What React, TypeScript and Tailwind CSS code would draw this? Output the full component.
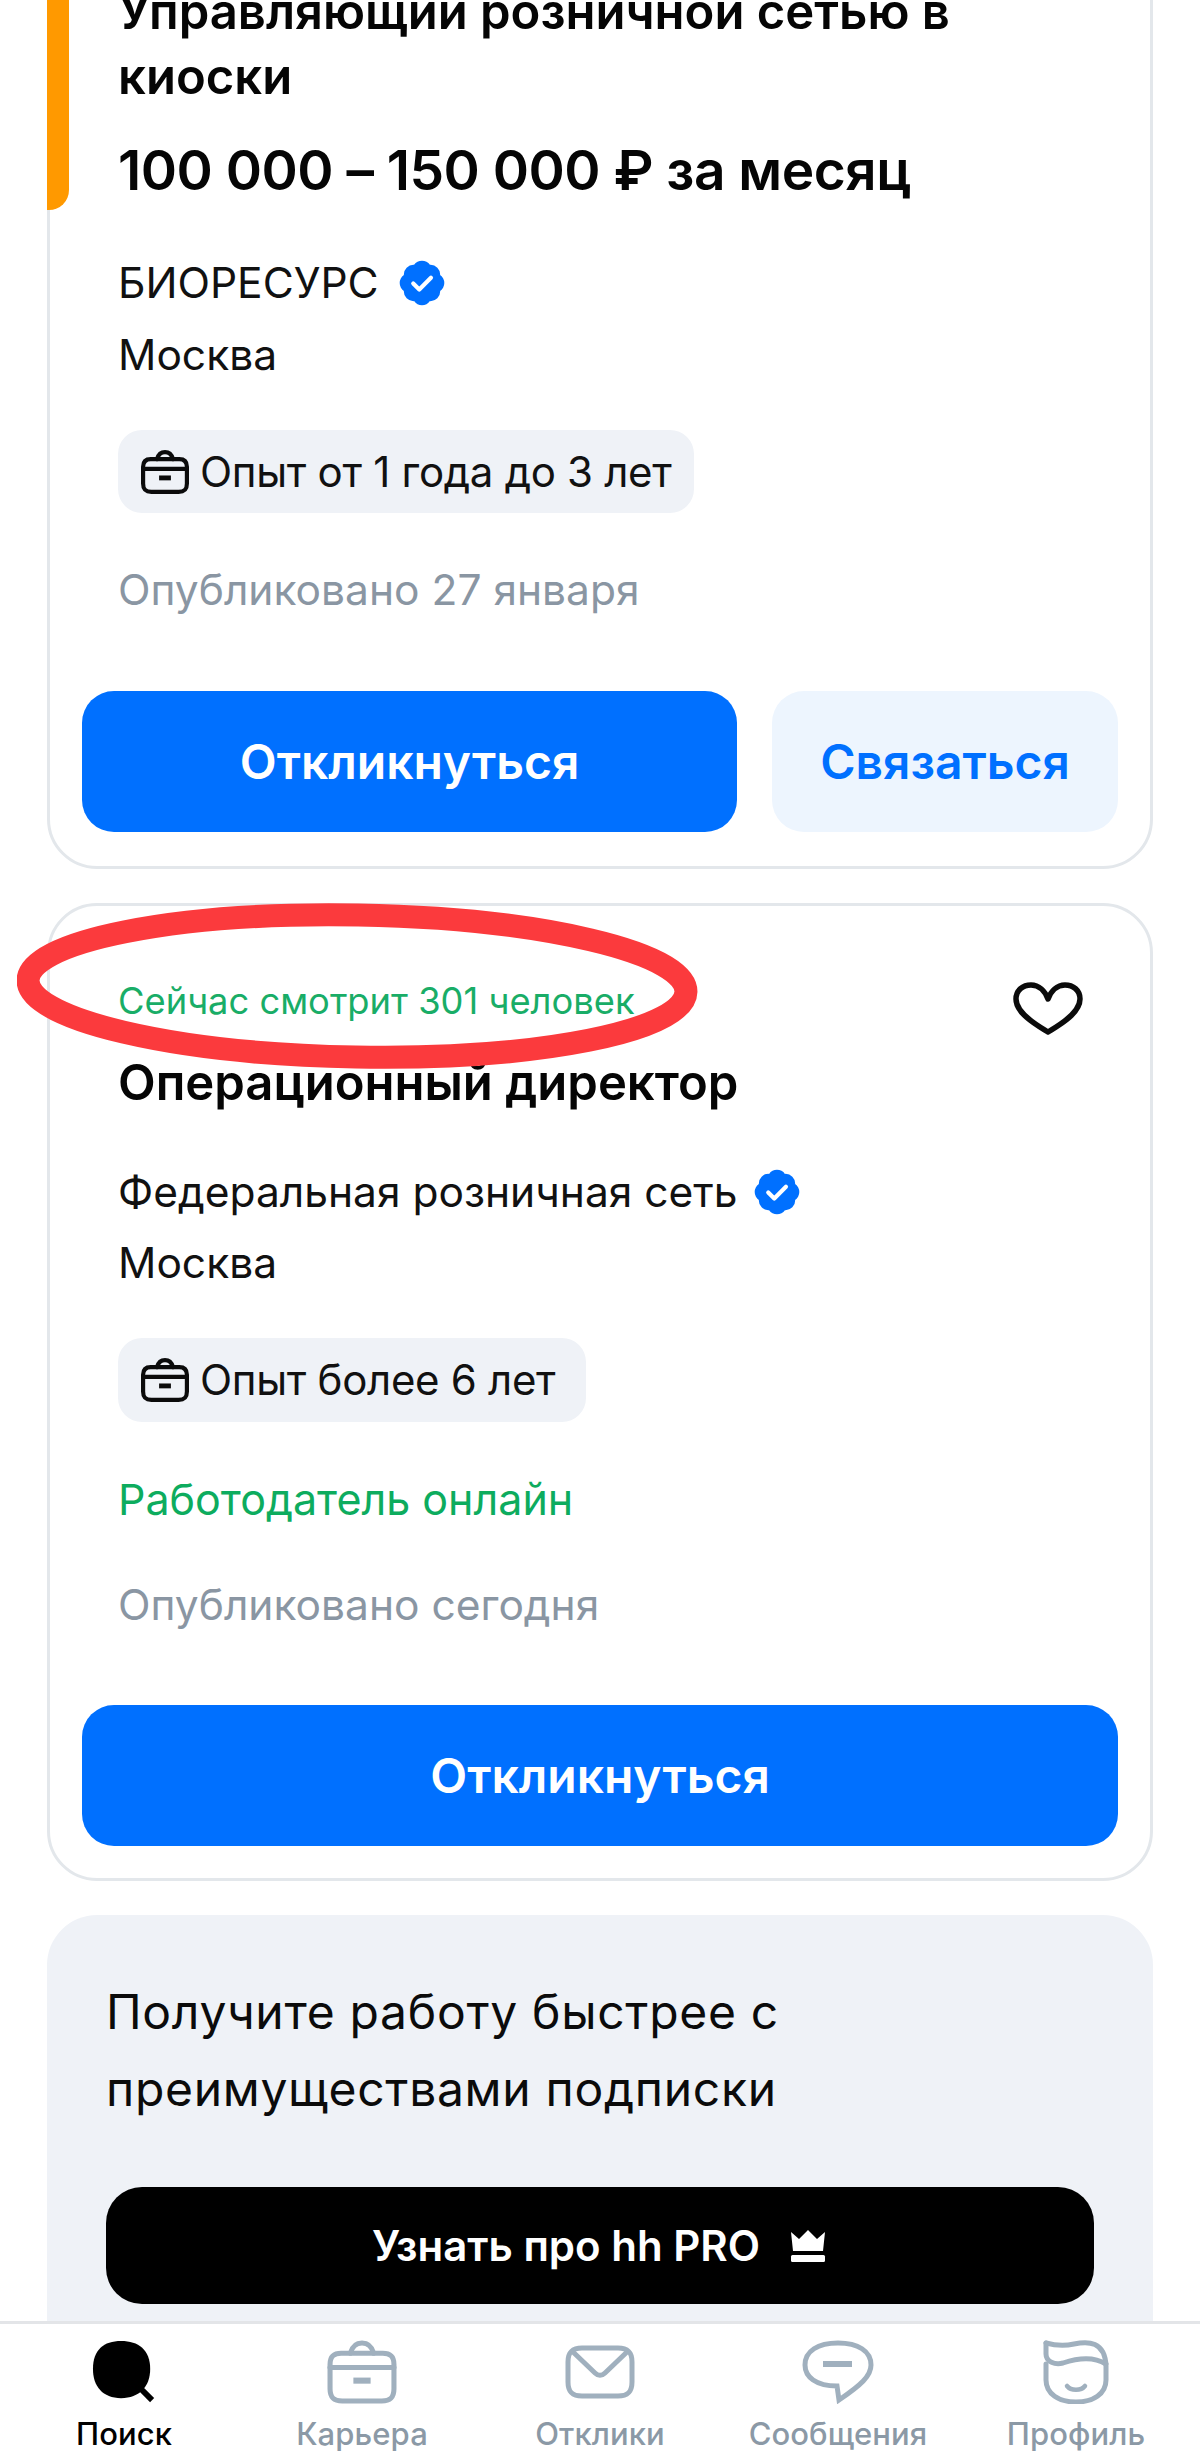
import React from "react";

const font = "font-['Inter','Liberation_Sans',sans-serif]";

function Verified({ className }: { className: string }) {
  return (
    <svg viewBox="0 0 24 24" className={className}>
      <path
        fill="#0070ff"
        d="M3.3 8.2a4.6 4.6 0 0 1 4.9-4.9 4.6 4.6 0 0 1 7.6 0 4.6 4.6 0 0 1 4.9 4.9 4.6 4.6 0 0 1 0 7.6 4.6 4.6 0 0 1-4.9 4.9 4.6 4.6 0 0 1-7.6 0 4.6 4.6 0 0 1-4.9-4.9 4.6 4.6 0 0 1 0-7.6Z"
      />
      <path d="M7.8 12.2l2.9 2.9 5.6-5.6" fill="none" stroke="#fff" strokeWidth="2" strokeLinecap="round" strokeLinejoin="round" />
    </svg>
  );
}

function Case({ className, stroke, width }: { className: string; stroke: string; width: number }) {
  return (
    <svg viewBox="0 0 69 63" className={className} fill="none" stroke={stroke} strokeWidth={width} strokeLinejoin="round" strokeLinecap="round">
      <path d="M23 13 C25 6 29 3 34.5 3 C40 3 44 6 46 13" />
      <path d="M3 24 C3 16 7 13 14 13 H55 C62 13 66 16 66 24 V48 C66 57 62 60 54 60 H15 C7 60 3 57 3 48 Z" />
      <path d="M3 27 H66" />
      <path d="M26 40 H43" strokeWidth={width + 1} strokeLinecap="butt" />
    </svg>
  );
}

function Chip({ text, extra }: { text: string; extra: string }) {
  return (
    <div className={`flex items-center rounded-[24px] bg-[#eff2f7] pl-[23px] ${extra}`}>
      <Case className="h-[44px] w-[48px] shrink-0" stroke="#0b0b0b" width={6} />
      <span className="ml-[11px] text-[42px] leading-[56px] tracking-[-0.3px] text-[#111111]">{text}</span>
    </div>
  );
}

function Blue({ extra, children }: { extra: string; children: React.ReactNode }) {
  return (
    <div className={`flex h-[141px] items-center justify-center rounded-[32px] text-[48px] font-semibold ${extra}`}>
      {children}
    </div>
  );
}

function Tab({ label, active, icon }: { label: string; active?: boolean; icon: React.ReactNode }) {
  return (
    <div className="flex flex-col items-center">
      <div className="flex h-[64px] items-center justify-center">{icon}</div>
      <span className={`mt-[8px] text-[31px] font-medium leading-[44px] tracking-[0.1px] ${active ? "text-black" : "text-[#8b99a6]"}`}>
        {label}
      </span>
    </div>
  );
}

export default function App() {
  return (
    <div className={`flex h-[2462px] w-[1200px] flex-col overflow-hidden bg-white ${font}`}>
      <main className="flex min-h-0 flex-1 flex-col overflow-hidden px-[47px]">
        {/* Card 1 */}
        <section className="relative mt-[-70px] shrink-0 rounded-[50px] border-[3px] border-[#e3e7eb] px-[32px] pb-[34px] pt-[46px]">
          <div className="absolute left-[-3px] top-[-3px] h-[280px] w-[22px] rounded-br-[20px] bg-[#ff9900]" />
          <div className="pl-[36px] pr-[38px]">
            <h2 className="text-[49px] font-semibold leading-[65px] text-[#050505]">
              Управляющий розничной сетью в киоски
            </h2>
            <p className="mt-[29px] text-[55px] font-semibold leading-[64px] tracking-[-0.5px] text-[#050505]">
              100 000 – 150 000 ₽ за месяц
            </p>
            <div className="mt-[53px] flex items-center text-[42.5px] leading-[56px] text-[#111111]">
              БИОРЕСУРС
              <Verified className="ml-[18px] h-[50px] w-[50px]" />
            </div>
            <p className="mt-[16px] text-[42.5px] leading-[56px] text-[#111111]">Москва</p>
            <Chip text="Опыт от 1 года до 3 лет" extra="mt-[47px] h-[83px] w-[576px]" />
            <p className="mt-[49px] text-[42.5px] leading-[56px] text-[#8a96a3]">Опубликовано 27 января</p>
          </div>
          <div className="mt-[73px] flex gap-[35px]">
            <Blue extra="w-[655px] bg-[#0070ff] text-white">Откликнуться</Blue>
            <Blue extra="w-[346px] bg-[#edf5fe] text-[#0070ff]">Связаться</Blue>
          </div>
        </section>

        {/* Card 2 */}
        <section className="relative mt-[34px] shrink-0 rounded-[50px] border-[3px] border-[#e3e7eb] px-[32px] pb-[32px] pt-[71px]">
          <svg viewBox="0 0 700 170" className="absolute left-[-33px] top-[-5px] z-10 h-[170px] w-[700px]">
            <ellipse cx="340" cy="85" rx="329" ry="71" fill="none" stroke="#fb3a3d" strokeWidth="23" transform="rotate(1 340 85)" />
          </svg>
          <svg viewBox="0 0 72 54" className="absolute right-[66px] top-[76px] h-[54px] w-[72px]" fill="none" stroke="#0b0b0b" strokeWidth="5.5" strokeLinejoin="round">
            <path d="M36 50 C30 46 4 33 4 17 C4 8 11 3 19 3 C27 3 33 9 36 17 C39 9 45 3 53 3 C61 3 68 8 68 17 C68 33 42 46 36 50 Z" />
          </svg>
          <div className="pl-[36px] pr-[38px]">
            <p className="text-[36.3px] leading-[48px] text-[#19ad67]">Сейчас смотрит 301 человек</p>
            <h2 className="mt-[26px] text-[49px] font-semibold leading-[63px] text-[#050505]">Операционный директор</h2>
            <div className="mt-[50px] flex items-center text-[42.5px] leading-[56px] text-[#111111]">
              Федеральная розничная сеть
              <Verified className="ml-[14px] h-[50px] w-[50px]" />
            </div>
            <p className="mt-[15px] text-[42.5px] leading-[56px] text-[#111111]">Москва</p>
            <Chip text="Опыт более 6 лет" extra="mt-[47px] h-[84px] w-[468px]" />
            <p className="mt-[49px] text-[43px] leading-[56px] text-[#0dac5e]">Работодатель онлайн</p>
            <p className="mt-[50px] text-[42.5px] leading-[56px] text-[#8a96a3]">Опубликовано сегодня</p>
          </div>
          <Blue extra="mt-[72px] bg-[#0070ff] text-white">Откликнуться</Blue>
        </section>

        {/* Promo */}
        <section className="mt-[34px] shrink-0 rounded-[50px] bg-[#eff2f7] px-[59px] pb-[100px] pt-[58px]">
          <p className="text-[48px] leading-[77px] tracking-[0.7px] text-[#0b0b0b]">
            Получите работу быстрее с<br />преимуществами подписки
          </p>
          <div className="mt-[60px] flex h-[117px] items-center justify-center rounded-[36px] bg-black text-[42px] font-semibold text-white">
            Узнать про hh PRO
            <svg viewBox="0 0 40 32" className="ml-[28px] h-[32px] w-[40px]" fill="#fff">
              <path d="M3 2 L11 9 L20 0 L29 9 L37 2 L35 21 H5 Z" />
              <rect x="3" y="25" width="34" height="7" rx="1.5" />
            </svg>
          </div>
        </section>
      </main>

      <nav className="grid h-[141px] shrink-0 grid-cols-5 border-t-[3px] border-[#e3e5e8] bg-white px-[5px] pt-[16px]">
        <Tab
          label="Поиск"
          active
          icon={
            <svg viewBox="0 0 66 66" className="h-[64px] w-[66px]">
              <path d="M30 1 C48 1 60 10 60 30 C60 48 49 60 30 60 C11 60 1 48 1 30 C1 10 12 1 30 1 Z" fill="#000" />
              <path d="M49 49 L62 62" stroke="#000" strokeWidth="6" />
            </svg>
          }
        />
        <Tab label="Карьера" icon={<Case className="h-[64px] w-[70px]" stroke="#a0b0be" width={5} />} />
        <Tab
          label="Отклики"
          icon={
            <svg viewBox="0 0 70 54" className="h-[54px] w-[70px]" fill="none" stroke="#a0b0be" strokeWidth="5" strokeLinejoin="round">
              <path d="M3 17 C3 7 7 3 17 3 H53 C63 3 67 7 67 17 V37 C67 47 63 51 53 51 H17 C7 51 3 47 3 37 Z" />
              <path d="M7 6 L30 28 C33 31 37 31 40 28 L63 6" />
            </svg>
          }
        />
        <Tab
          label="Сообщения"
          icon={
            <svg viewBox="0 0 72 64" className="h-[64px] w-[72px]" fill="none" stroke="#a0b0be" strokeWidth="5">
              <path d="M36 3 C56 3 69 11 69 25 C69 36 59 45 37 60 L35 46 C14 46 3 37 3 25 C3 11 16 3 36 3 Z" strokeLinejoin="miter" />
              <path d="M21 24 H50" strokeWidth="6" />
            </svg>
          }
        />
        <Tab
          label="Профиль"
          icon={
            <svg viewBox="0 0 66 64" className="h-[64px] w-[66px]" fill="none" stroke="#a0b0be" strokeWidth="5" strokeLinecap="round">
              <path d="M3 3 C14 6 22 6 31 4 C45 1 62 1 63 26 V40 C63 54 50 62 33 62 C16 62 3 54 3 40 V24" />
              <path d="M3 3 V14 C3 22 12 25 20 23 C32 19 50 16 63 24" />
              <path d="M24 46 C28 51 38 51 42 46" strokeWidth="4.5" />
            </svg>
          }
        />
      </nav>
    </div>
  );
}
